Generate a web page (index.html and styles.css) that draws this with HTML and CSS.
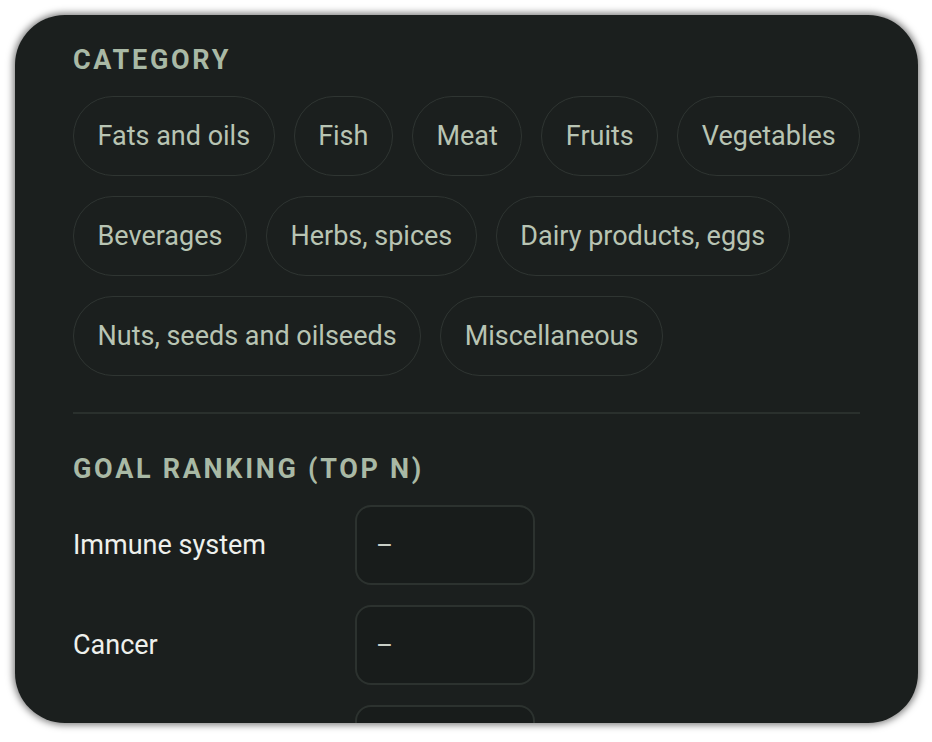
FILE: index.html
```html
<!DOCTYPE html>
<html lang="en">
<head>
    <meta charset="UTF-8">
    <meta name="viewport" content="width=device-width, initial-scale=1.0">
    <title>Filters</title>
    <link rel="stylesheet" href="styles.css">
</head>
<body>
    <div class="panel">
        <section class="filter-section">
            <h2 class="section-title">Category</h2>
            <div class="chip-list">
                <button class="chip">Fats and oils</button>
                <button class="chip">Fish</button>
                <button class="chip">Meat</button>
                <button class="chip">Fruits</button>
                <button class="chip">Vegetables</button>
                <button class="chip">Beverages</button>
                <button class="chip">Herbs, spices</button>
                <button class="chip">Dairy products, eggs</button>
                <button class="chip">Nuts, seeds and oilseeds</button>
                <button class="chip">Miscellaneous</button>
            </div>
        </section>

        <hr class="divider">

        <section class="filter-section">
            <h2 class="section-title">Goal ranking (top N)</h2>
            <div class="goal-list">
                <div class="goal-row">
                    <label class="goal-label">Immune system</label>
                    <div class="goal-select">–</div>
                </div>
                <div class="goal-row">
                    <label class="goal-label">Cancer</label>
                    <div class="goal-select">–</div>
                </div>
                <!-- next row is scrolled below the panel edge -->
                <div class="goal-row">
                    <label class="goal-label"></label>
                    <div class="goal-select"></div>
                </div>
            </div>
        </section>
    </div>
</body>
</html>
```

FILE: styles.css
```css
body {
    font-family: Roboto, "Noto Sans", sans-serif;
    margin: 0;
    padding: 15px 14px 19px 15px;
    background-color: #ffffff;
}
.panel {
    height: 708px;
    box-sizing: border-box;
    background-color: #1b1f1e;
    border-radius: 50px;
    padding: 30px 58px 0 58px;
    overflow: hidden;
    box-shadow: 0 0 7px 2px rgba(0,0,0,0.5);
}
.section-title {
    margin: 0;
    color: #a9b9a5;
    font-size: 27px;
    line-height: 30px;
    font-weight: 700;
    letter-spacing: 0.1em;
    text-transform: uppercase;
}
.chip-list {
    display: flex;
    flex-wrap: wrap;
    gap: 20px 19px;
    margin: 21px -8px 0 0;
}
.chip {
    font-family: inherit;
    font-size: 27px;
    line-height: 28px;
    color: #b8c4b3;
    background: transparent;
    border: 1px solid #2f3532;
    border-radius: 40px;
    padding: 25px 23.5px;
    cursor: pointer;
}
.divider {
    border: none;
    border-top: 2px solid #2a302d;
    margin: 36px 0 40px 0;
}
.goal-list {
    display: flex;
    flex-direction: column;
    gap: 20px;
    margin-top: 21px;
}
.goal-row {
    display: flex;
    align-items: center;
}
.goal-label {
    width: 282px;
    color: #eef0ec;
    font-size: 27px;
}
.goal-select {
    width: 180px;
    height: 80px;
    box-sizing: border-box;
    border: 2px solid #2c322f;
    border-radius: 16px;
    background-color: #181c1b;
    color: #c9cfc6;
    font-size: 26px;
    padding: 0 19px;
    display: flex;
    align-items: center;
}
```
